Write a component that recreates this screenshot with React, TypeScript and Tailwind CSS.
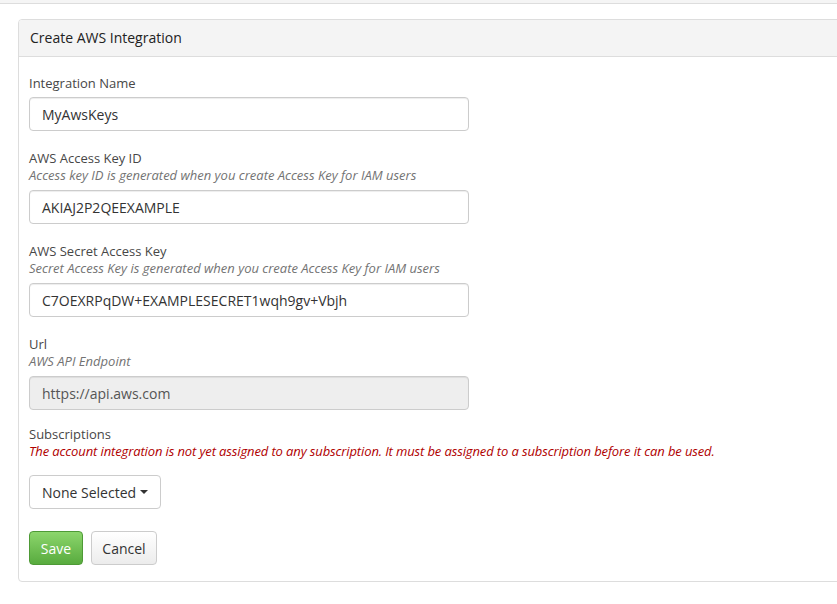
import React from "react";

const font = { fontFamily: '"Open Sans", "Liberation Sans", sans-serif' };

function Field({
  label,
  help,
  value,
  disabled,
  mb = "mb-[15px]",
}: {
  label: string;
  help?: string;
  value: string;
  disabled?: boolean;
  mb?: string;
}) {
  return (
    <div className={mb}>
      {help ? (
        <>
          <div className="h-[21px] text-[13px] leading-[24px] text-[#474747]">{label}</div>
          <div className="mb-[5px] h-[18px] text-[13px] leading-[16px] italic text-[#737373]">{help}</div>
        </>
      ) : (
        <div className="h-[20px] mb-[5px] text-[13px] leading-[22px] text-[#474747]">{label}</div>
      )}
      <div
        className={`w-[440px] h-[34px] rounded-[4px] border border-[#ccc] px-[12px] text-[14px] leading-[34px] shadow-[inset_0_1px_1px_rgba(0,0,0,0.075)] ${
          disabled ? "bg-[#eee] text-[#555]" : "bg-white text-[#333]"
        }`}
      >
        {value}
      </div>
    </div>
  );
}

export default function App() {
  return (
    <div className="w-[837px] h-[604px] bg-white overflow-hidden" style={font}>
      <div className="h-[4px] bg-[#f5f5f5] border-b border-[#ddd]" />
      <div className="pt-[15px] pl-[18px]">
        <div className="w-[900px] border border-[#ddd] rounded-[4px] bg-white">
          <div className="h-[37px] bg-[#f4f4f4] border-b border-[#ddd] rounded-t-[3px] pl-[11px] text-[14px] leading-[36px] text-[#222]">
            Create AWS Integration
          </div>
          <div className="pt-[15px] pl-[10px] pb-[16px]">
            <Field label="Integration Name" value="MyAwsKeys" />
            <Field
              label="AWS Access Key ID"
              help="Access key ID is generated when you create Access Key for IAM users"
              value="AKIAJ2P2QEEXAMPLE"
            />
            <Field
              label="AWS Secret Access Key"
              help="Secret Access Key is generated when you create Access Key for IAM users"
              value="C7OEXRPqDW+EXAMPLESECRET1wqh9gv+Vbjh"
            />
            <Field
              label="Url"
              help="AWS API Endpoint"
              value="https://api.aws.com"
              disabled
              mb="mb-[13px]"
            />
            <div>
              <div className="h-[20px] text-[13px] leading-[22px] text-[#474747]">Subscriptions</div>
              <div className="h-[17px] text-[13px] leading-[17px] italic tracking-[-0.12px] text-[#b00000] whitespace-nowrap">
                The account integration is not yet assigned to any subscription. It must be assigned to a subscription before it can be used.
              </div>
              <div className="mt-[15px]">
                <div className="inline-flex items-center h-[34px] px-[12px] rounded-[4px] border border-[#ccc] bg-white text-[14px] text-[#333]">
                  None Selected
                  <span className="ml-[4px] inline-block w-0 h-0 border-l-[4px] border-r-[4px] border-t-[4px] border-l-transparent border-r-transparent border-t-[#333]" />
                </div>
              </div>
              <div className="mt-[22px] flex gap-[8px]">
                <div className="h-[34px] w-[54px] flex items-center justify-center rounded-[4px] border border-[#4e9a36] bg-gradient-to-b from-[#8cd66c] to-[#58ab3e] text-white text-[14px]">
                  Save
                </div>
                <div className="h-[34px] w-[66px] flex items-center justify-center rounded-[4px] border border-[#ccc] bg-gradient-to-b from-white to-[#ececec] text-[#333] text-[14px]">
                  Cancel
                </div>
              </div>
            </div>
          </div>
        </div>
      </div>
    </div>
  );
}
